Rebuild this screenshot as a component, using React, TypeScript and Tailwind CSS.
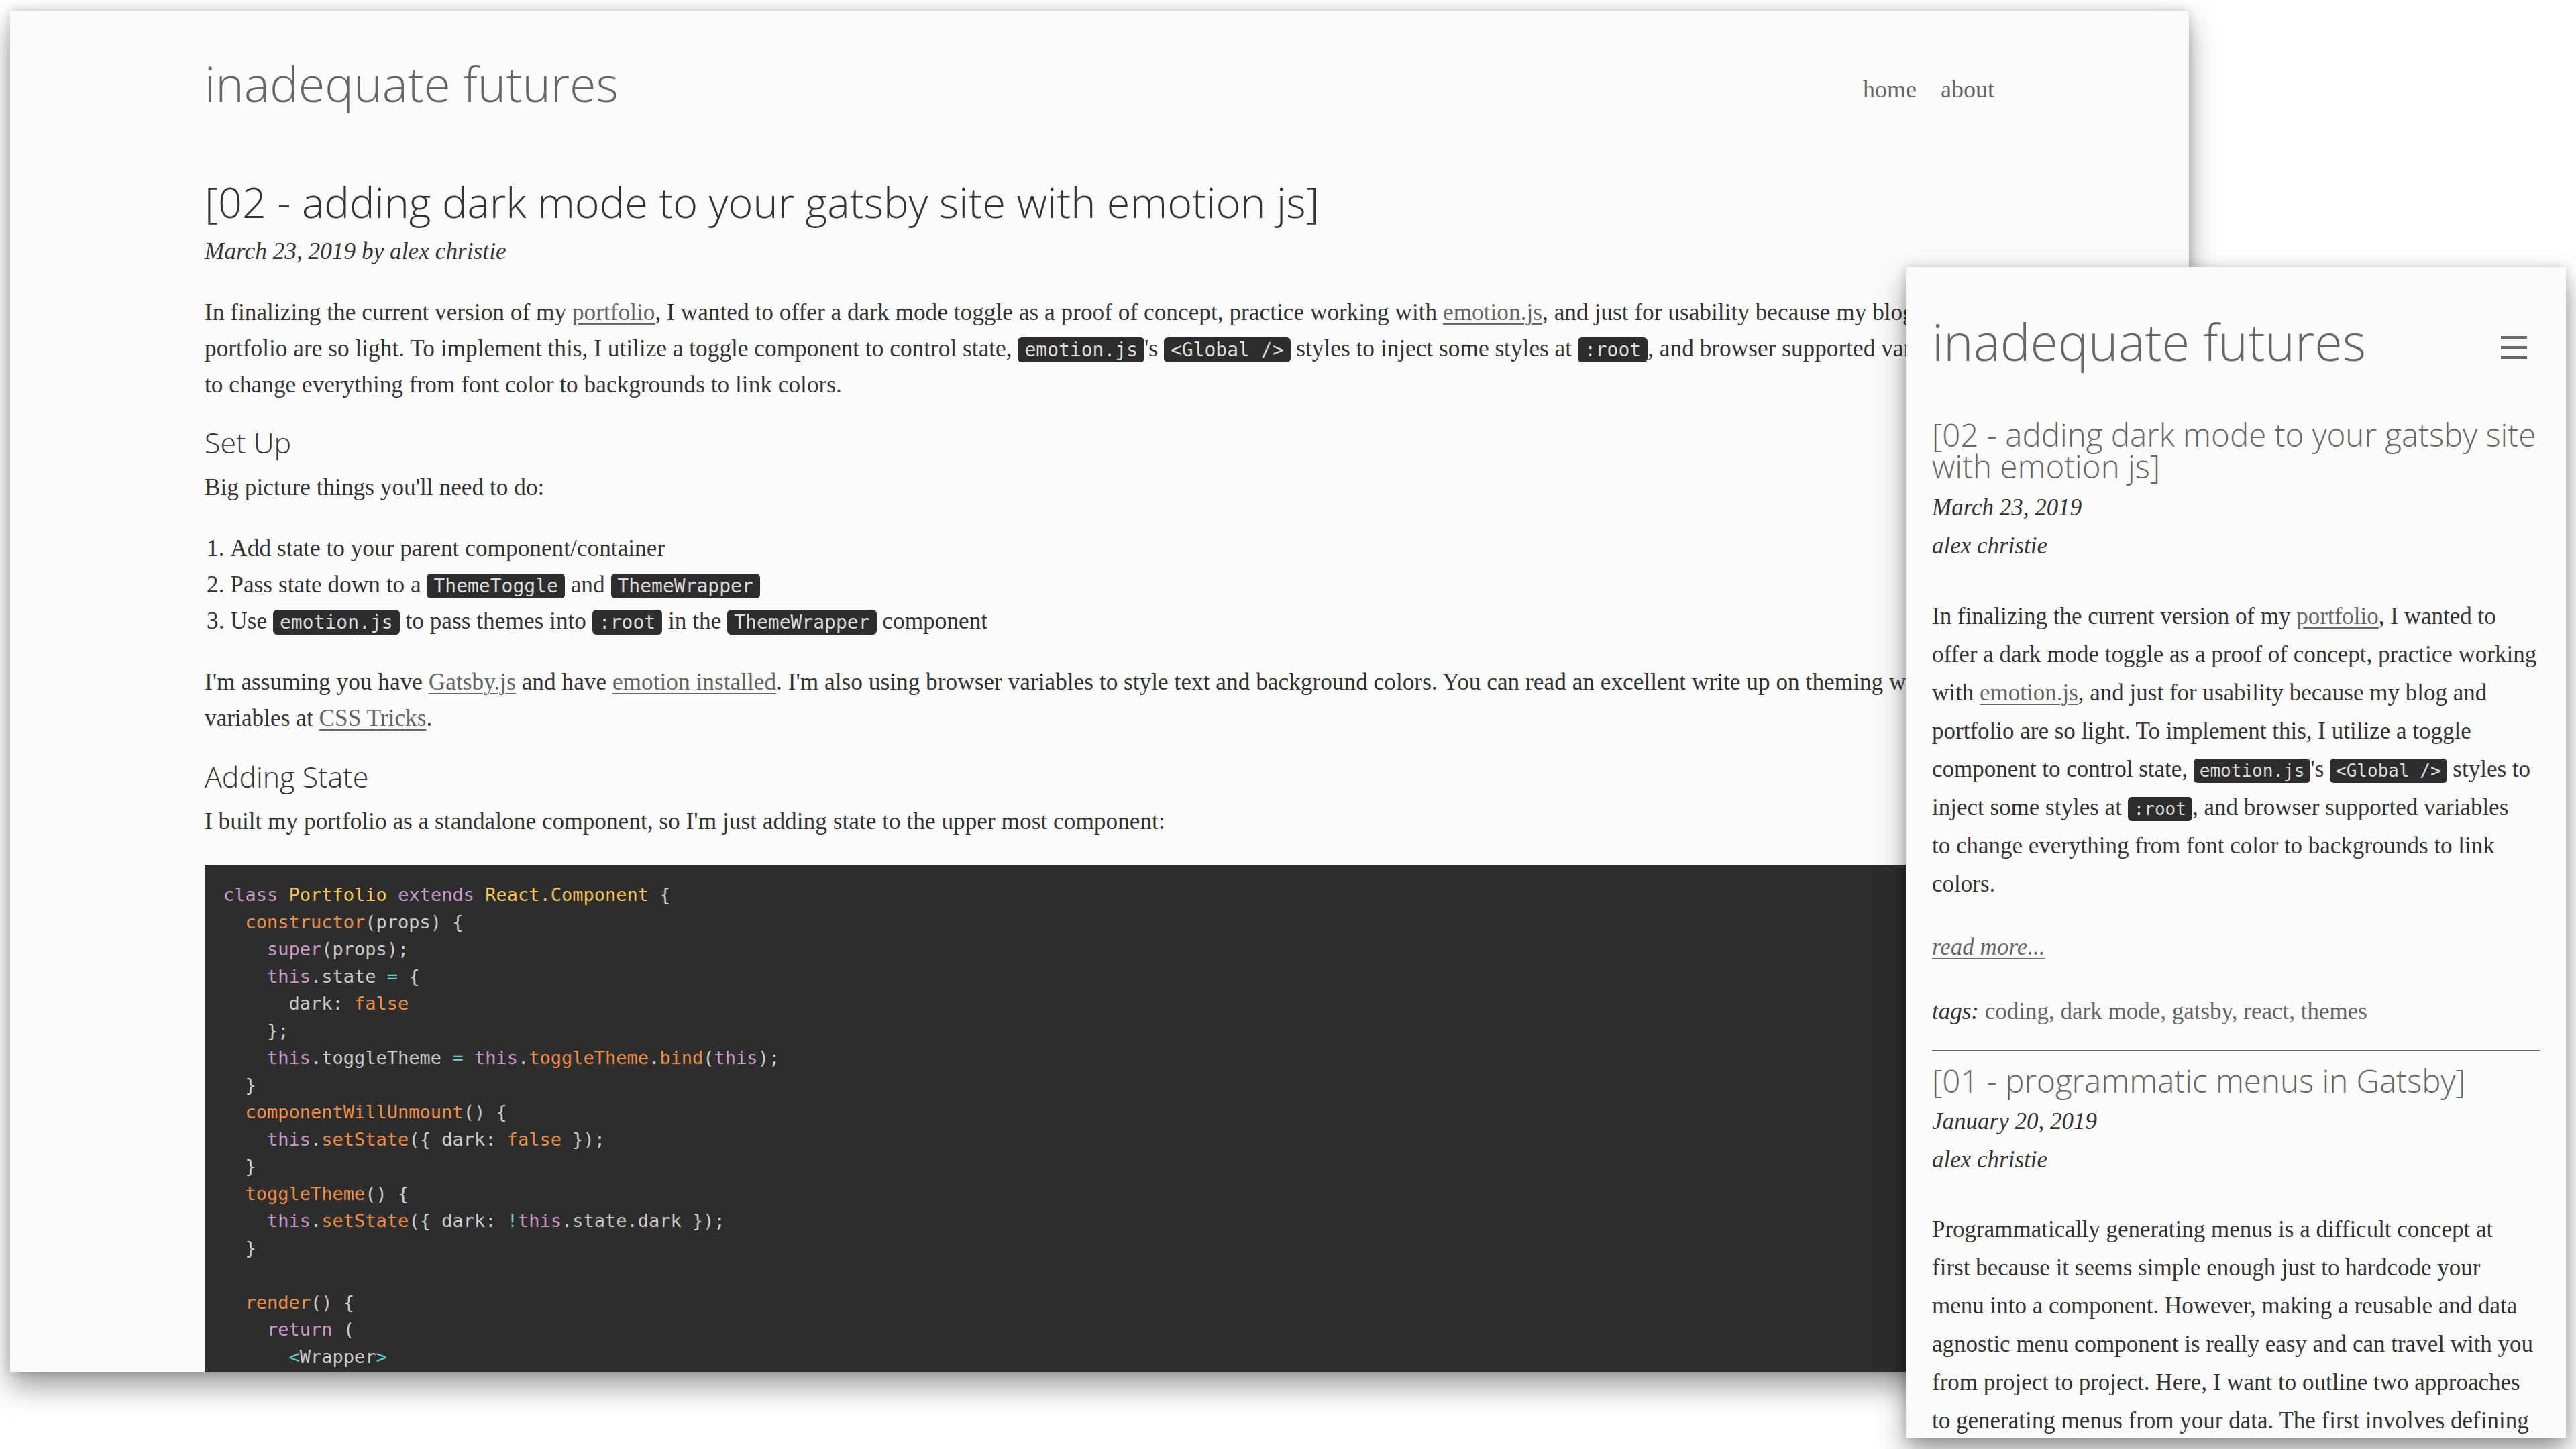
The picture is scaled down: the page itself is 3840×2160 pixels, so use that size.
import React from 'react';

const sans = "font-['Open_Sans',sans-serif]";
const serif = "font-['Liberation_Serif',serif]";
const mono = "font-['DejaVu_Sans_Mono',monospace]";

const K = 'text-[#cc99cd]';
const Y = 'text-[#f8c555]';
const F = 'text-[#f08d49]';
const OP = 'text-[#67cdcc]';

type Tok = [string, string?];

// class component snippet shown in the desktop post
const codeLines: Tok[][] = [
  [['class', K], [' '], ['Portfolio', Y], [' '], ['extends', K], [' '], ['React.Component', Y], [' {']],
  [['  '], ['constructor', F], ['(props) {']],
  [['    '], ['super', K], ['(props);']],
  [['    '], ['this', K], ['.state '], ['=', OP], [' {']],
  [['      dark: '], ['false', F]],
  [['    };']],
  [['    '], ['this', K], ['.toggleTheme '], ['=', OP], [' '], ['this', K], ['.'], ['toggleTheme', F], ['.'], ['bind', F], ['('], ['this', K], [');']],
  [['  }']],
  [['  '], ['componentWillUnmount', F], ['() {']],
  [['    '], ['this', K], ['.'], ['setState', F], ['({ dark: '], ['false', F], [' });']],
  [['  }']],
  [['  '], ['toggleTheme', F], ['() {']],
  [['    '], ['this', K], ['.'], ['setState', F], ['({ dark: '], ['!', OP], ['this', K], ['.state.dark });']],
  [['  }']],
  [[' ']],
  [['  '], ['render', F], ['() {']],
  [['    '], ['return', K], [' (']],
  [['      '], ['<', OP], ['Wrapper'], ['>', OP]],
  [['        '], ['<', OP], ['ThemeToggle'], ['>', OP]],
  [['      '], ['</', OP], ['Wrapper'], ['>', OP]],
];

function Code({ children, small = false }: { children: React.ReactNode; small?: boolean }) {
  return (
    <code
      className={
        small
          ? `${mono} rounded-[6px] bg-[#2d2d2d] px-[9px] py-[3px] text-[26px] leading-none text-[#dddddd]`
          : `${mono} rounded-[6px] bg-[#2d2d2d] px-[10px] py-[2px] text-[28px] leading-none text-[#dddddd]`
      }
    >
      {children}
    </code>
  );
}

function Link({ children }: { children: React.ReactNode }) {
  return <a className="text-[#666] underline decoration-[2px] underline-offset-[5px]">{children}</a>;
}

function DesktopPage() {
  return (
    <div className="absolute left-[15px] top-[16px] h-[2029px] w-[3248px] overflow-hidden bg-[#fbfbfb] shadow-[0_0_14px_rgba(0,0,0,0.18),0_22px_40px_rgba(0,0,0,0.38)]">
      <div className={`mx-auto w-[2668px] text-[#333] ${serif}`}>
        <header className="flex items-start justify-between pt-[72px]">
          <div className={`${sans} text-[72px] font-light leading-[72px] text-[#666]`}>inadequate futures</div>
          <nav className="mt-[27px] flex gap-[36px] text-[36px] leading-[36px] text-[#666]">
            <a>home</a>
            <a>about</a>
          </nav>
        </header>

        <h1 className={`${sans} mt-[109px] whitespace-nowrap text-[63px] font-light leading-[63px] text-[#333]`}>
          [02 - adding dark mode to your gatsby site with emotion js]
        </h1>
        <p className="mt-[16px] text-[35.3px] italic leading-[54px]">March 23, 2019 by alex christie</p>

        <div className="text-[35.3px] leading-[54px]">
          <p className="mt-[37px] whitespace-nowrap">
            In finalizing the current version of my <Link>portfolio</Link>, I wanted to offer a dark mode toggle as a
            proof of concept, practice working with <Link>emotion.js</Link>, and just for usability because my blog and
            <br />
            portfolio are so light. To implement this, I utilize a toggle component to control state,{' '}
            <Code>emotion.js</Code>'s <Code>{'<Global />'}</Code> styles to inject some styles at <Code>:root</Code>,
            and browser supported variables
            <br />
            to change everything from font color to backgrounds to link colors.
          </p>

          <h2 className={`${sans} mt-[32px] text-[43px] font-light leading-[54px] text-[#333]`}>Set Up</h2>
          <p className="mt-[13px]">Big picture things you'll need to do:</p>

          <ol className="mt-[37px] list-inside list-decimal pl-[3px]">
            <li>Add state to your parent component/container</li>
            <li>
              Pass state down to a <Code>ThemeToggle</Code> and <Code>ThemeWrapper</Code>
            </li>
            <li>
              Use <Code>emotion.js</Code> to pass themes into <Code>:root</Code> in the <Code>ThemeWrapper</Code>{' '}
              component
            </li>
          </ol>

          <p className="mt-[37px] whitespace-nowrap">
            I'm assuming you have <Link>Gatsby.js</Link> and have <Link>emotion installed</Link>. I'm also using
            browser variables to style text and background colors. You can read an excellent write up on theming with
            CSS
            <br />
            variables at <Link>CSS Tricks</Link>.
          </p>

          <h2 className={`${sans} mt-[33px] text-[43px] font-light leading-[54px] text-[#333]`}>Adding State</h2>
          <p className="mt-[13px]">
            I built my portfolio as a standalone component, so I'm just adding state to the upper most component:
          </p>
        </div>

        <pre
          className={`${mono} mt-[37px] bg-[#2d2d2d] px-[28px] pb-[28px] pt-[25px] text-[27px] leading-[40.5px] text-[#cccccc]`}
        >
          {codeLines.map((line, i) => (
            <div key={i}>
              {line.map(([text, color], j) => (
                <span key={j} className={color}>
                  {text}
                </span>
              ))}
            </div>
          ))}
        </pre>
      </div>
    </div>
  );
}

function MobilePage() {
  return (
    <div
      className={`absolute left-[2841px] top-[398px] h-[1746px] w-[984px] overflow-hidden bg-[#fbfbfb] px-[39px] text-[#333] shadow-[0_0_14px_rgba(0,0,0,0.18),0_22px_40px_rgba(0,0,0,0.38)] ${serif}`}
    >
      <header className="flex items-start justify-between pt-[73px]">
        <div className={`${sans} whitespace-nowrap text-[75.5px] font-light leading-[75px] text-[#666]`}>
          inadequate futures
        </div>
        <button className="mr-[19px] mt-[30px] flex flex-col gap-[11px]">
          <span className="h-[4px] w-[39px] bg-[#666]" />
          <span className="h-[4px] w-[39px] bg-[#666]" />
          <span className="h-[4px] w-[39px] bg-[#666]" />
        </button>
      </header>

      <article className="text-[35px] leading-[57px]">
        <h1 className={`${sans} mt-[78px] whitespace-nowrap text-[47.5px] font-light leading-[47px] text-[#666]`}>
          [02 - adding dark mode to your gatsby site
          <br />
          with emotion js]
        </h1>
        <div className="mt-[10px] italic">
          <p>March 23, 2019</p>
          <p>alex christie</p>
        </div>
        <p className="mt-[48px] whitespace-nowrap">
          In finalizing the current version of my <Link>portfolio</Link>, I wanted to
          <br />
          offer a dark mode toggle as a proof of concept, practice working
          <br />
          with <Link>emotion.js</Link>, and just for usability because my blog and
          <br />
          portfolio are so light. To implement this, I utilize a toggle
          <br />
          component to control state, <Code small>emotion.js</Code>'s <Code small>{'<Global />'}</Code> styles to
          <br />
          inject some styles at <Code small>:root</Code>, and browser supported variables
          <br />
          to change everything from font color to backgrounds to link
          <br />
          colors.
        </p>
        <p className="mt-[37px] italic">
          <Link>read more...</Link>
        </p>
        <p className="mt-[39px]">
          <span className="italic">tags:</span> <span className="text-[#666]">coding, dark mode, gatsby, react, themes</span>
        </p>
      </article>

      <hr className="mt-[29px] border-0 border-t-[2px] border-[#666]" />

      <article className="text-[35px] leading-[57px]">
        <h1 className={`${sans} mt-[20px] whitespace-nowrap text-[47.5px] font-light leading-[47px] text-[#666]`}>
          [01 - programmatic menus in Gatsby]
        </h1>
        <div className="mt-[9px] italic">
          <p>January 20, 2019</p>
          <p>alex christie</p>
        </div>
        <p className="mt-[47px] whitespace-nowrap">
          Programmatically generating menus is a difficult concept at
          <br />
          first because it seems simple enough just to hardcode your
          <br />
          menu into a component. However, making a reusable and data
          <br />
          agnostic menu component is really easy and can travel with you
          <br />
          from project to project. Here, I want to outline two approaches
          <br />
          to generating menus from your data. The first involves defining
          <br />
          a menu in your site config.
        </p>
      </article>
    </div>
  );
}

export default function App() {
  return (
    <div className="relative h-[2160px] w-[3840px] overflow-hidden bg-white">
      <DesktopPage />
      <MobilePage />
    </div>
  );
}
